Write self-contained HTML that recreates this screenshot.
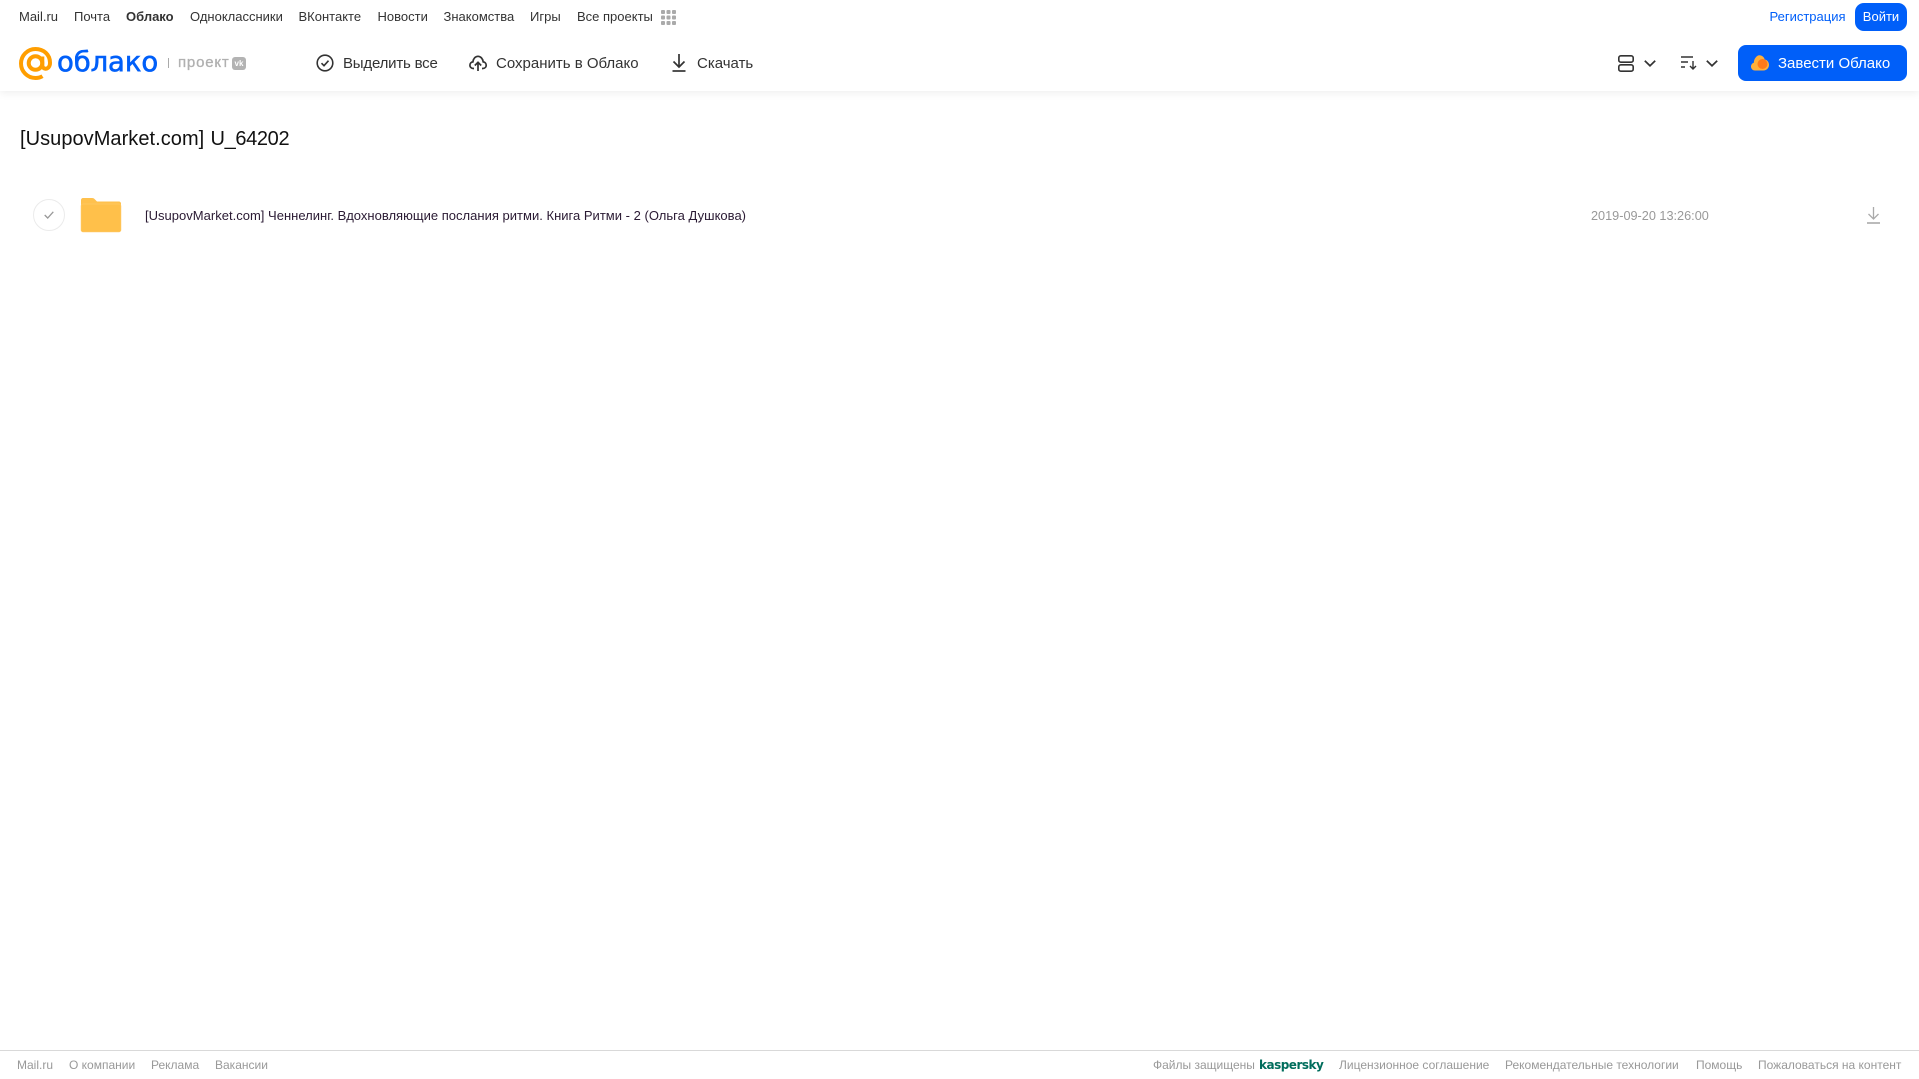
<!DOCTYPE html>
<html lang="ru"><head><meta charset="utf-8"><title>Облако</title>
<style>
html,body{margin:0;padding:0;background:#fff}
body{width:1919px;height:1079px;position:relative;overflow:hidden;font-family:"Liberation Sans",sans-serif}
.t{position:absolute;white-space:nowrap;line-height:20px;height:20px}
.n{font-size:13px;color:#333;top:7px}
.b{font-size:15px;color:#333;top:54px}
.f{font-size:12px;color:#999;top:1055px}
svg{position:absolute;overflow:visible}
#hdr{position:absolute;left:0;top:0;width:1919px;height:91px;background:#fff;box-shadow:0 2px 8px rgba(0,0,0,.07)}
</style></head><body>
<div id="hdr"></div>
<span class="t n" style="left:19px">Mail.ru</span>
<span class="t n" style="left:74px">Почта</span>
<span class="t n" style="left:126px;font-weight:bold">Облако</span>
<span class="t n" style="left:190px">Одноклассники</span>
<span class="t n" style="left:298.500px">ВКонтакте</span>
<span class="t n" style="left:377.500px">Новости</span>
<span class="t n" style="left:443.500px">Знакомства</span>
<span class="t n" style="left:530px">Игры</span>
<span class="t n" style="left:577px">Все проекты</span>
<svg style="left:661px;top:10px" width="15" height="15" fill="#aaa"><rect width="4" height="4" rx="1"/><rect x="5.500" width="4" height="4" rx="1"/><rect x="11" width="4" height="4" rx="1"/><rect y="5.500" width="4" height="4" rx="1"/><rect x="5.500" y="5.500" width="4" height="4" rx="1"/><rect x="11" y="5.500" width="4" height="4" rx="1"/><rect y="11" width="4" height="4" rx="1"/><rect x="5.500" y="11" width="4" height="4" rx="1"/><rect x="11" y="11" width="4" height="4" rx="1"/></svg>
<span class="t n" style="left:1769.500px;color:#005ff9">Регистрация</span>
<div style="position:absolute;left:1855px;top:3px;width:52px;height:28px;border-radius:9px;background:#005ff9;color:#fff;font-size:13px;line-height:28px;text-align:center">Войти</div>
<svg style="left:19px;top:47px" width="33" height="33" viewBox="0 0 33 33" fill="none" stroke="#ff9e00" stroke-width="4"><circle cx="16.500" cy="16" r="6.800"/><path d="M23.300 9.500v8.500c0 5.500 7.700 5 7.700-2.300C31 7.500 24.500 2 16.500 2 8.500 2 2 8.500 2 16.500S8.500 31 16.500 31c3 0 5-.6 7-1.800"/></svg>
<span class="t" style="left:57px;top:46px;height:32px;line-height:32px;font-family:'DejaVu Sans',sans-serif;font-size:27.500px;color:#005ff9;-webkit-text-stroke:.6px #005ff9;letter-spacing:-.1px">облако</span>
<div style="position:absolute;left:168px;top:58px;width:1px;height:10px;background:#aaa"></div>
<span class="t" style="left:178px;top:53px;font-size:15px;color:#b0b0b0;-webkit-text-stroke:.3px #b0b0b0;letter-spacing:.8px">проект</span>
<div style="position:absolute;left:232px;top:57px;width:14px;height:13px;border-radius:3px;background:#b3b3b3;color:#fff;font-size:8px;font-weight:bold;line-height:13px;text-align:center">vk</div>
<svg style="left:316px;top:54px" width="18" height="18" viewBox="0 0 18 18" fill="none" stroke="#333" stroke-width="1.600"><circle cx="9" cy="9" r="7.800"/><path d="M5.500 9.200l2.500 2.500 4.500-5"/></svg>
<span class="t b" style="left:343px;letter-spacing:-.2px">Выделить все</span>
<svg style="left:469px;top:54px" width="18" height="18" viewBox="0 0 18 18" fill="none" stroke="#333" stroke-width="1.700"><path d="M5 14.500H4.500C2 14.500 .9 12.800 .9 11.200c0-1.800 1.300-3.100 3-3.300C4.300 4.600 6.400 2.300 9 2.300s4.800 2.300 5.200 5.600c1.700.2 3 1.500 3 3.300 0 1.600-1.200 3.300-3.600 3.300H13"/><path d="M9 17V8.500M5.800 11.500 9 8.300l3.200 3.200"/></svg>
<span class="t b" style="left:496px">Сохранить в Облако</span>
<svg style="left:671px;top:54px" width="16" height="18" viewBox="0 0 16 18" fill="none" stroke="#333" stroke-width="1.700"><path d="M8 0v13M2.500 7.500 8 13l5.500-5.500"/><path d="M1.500 17h13"/></svg>
<span class="t b" style="left:697px">Скачать</span>
<svg style="left:1618px;top:55px" width="16" height="17" viewBox="0 0 16 17" fill="none" stroke="#333" stroke-width="1.600"><rect x=".8" y=".8" width="14.400" height="6.400" rx="2"/><rect x=".8" y="9.800" width="14.400" height="6.400" rx="2"/></svg>
<svg style="left:1644px;top:60px" width="12" height="7" viewBox="0 0 12 7" fill="none" stroke="#333" stroke-width="1.700"><path d="M.8.800 6 5.800 11.200.800"/></svg>
<svg style="left:1681px;top:56px" width="16" height="14" viewBox="0 0 16 14" fill="none" stroke="#333" stroke-width="1.400"><path d="M0 1h12M0 6h7M0 11h4"/><path d="M12 5v8M9 10l3 3 3-3"/></svg>
<svg style="left:1706px;top:60px" width="12" height="7" viewBox="0 0 12 7" fill="none" stroke="#333" stroke-width="1.700"><path d="M.8.800 6 5.800 11.200.800"/></svg>
<div style="position:absolute;left:1738px;top:45px;width:169px;height:36px;border-radius:8px;background:#005ff9"></div>
<svg style="left:1751px;top:55px" width="18" height="16" viewBox="0 0 18 16"><path d="M4 15.500C1.800 15.500 0 13.800 0 11.500c0-1.900 1.200-3.400 2.800-3.800C3 4 5.500 .3 8.500.3c2.500 0 4.600 1.800 5.200 4.200 2.400.3 4.300 2.500 4.300 5.400 0 3-2.300 5.600-5.500 5.600z" fill="#ffb03a"/><circle cx="11.500" cy="9" r="5" fill="#ff7a1a"/></svg>
<span class="t" style="left:1778px;top:54px;font-size:15px;color:#fff">Завести Облако</span>
<span class="t" style="left:20px;top:125px;height:28px;line-height:28px;font-size:20px;color:#111;letter-spacing:.05px">[UsupovMarket.com]</span>
<span class="t" style="left:210.500px;top:125px;height:28px;line-height:28px;font-size:20px;color:#111;letter-spacing:-.35px">U_64202</span>
<div style="position:absolute;left:33px;top:199px;width:30px;height:30px;border:1px solid #ebebeb;border-radius:50%"></div>
<svg style="left:44px;top:211px" width="10" height="8" viewBox="0 0 10 8" fill="none" stroke="#999" stroke-width="1.300"><path d="M.7 4l3 3L9.300.8"/></svg>
<svg style="left:81px;top:198px" width="40" height="34" viewBox="0 0 40 34"><path d="M2 0h9c1.500 0 2.200.6 3 1.500L16 3.500h22c1.100 0 2 .9 2 2V32c0 1.100-.9 2-2 2H2c-1.100 0-2-.9-2-2V2C0 .9.900 0 2 0z" fill="#ffc14d"/><path d="M0 8c0-1.100.9-2 2-2h36c1.100 0 2 .9 2 2v24c0 1.100-.9 2-2 2H2c-1.100 0-2-.9-2-2z" fill="#ffc04a" stroke="#ffcd70" stroke-width=".5"/></svg>
<span class="t" style="left:145px;top:206px;font-size:13px;color:#2a1a33;letter-spacing:.013px">[UsupovMarket.com] Ченнелинг. Вдохновляющие послания ритми. Книга Ритми - 2 (Ольга Душкова)</span>
<span class="t" style="left:1591px;top:206px;font-size:12.700px;color:#999">2019-09-20 13:26:00</span>
<svg style="left:1867px;top:207px" width="13" height="17" viewBox="0 0 13 17" fill="none" stroke="#aaa" stroke-width="1.300"><path d="M6.500 0v12M1.500 7l5 5 5-5"/><path d="M0 16h13" stroke-width="1.600"/></svg>
<div style="position:absolute;left:0;top:1050px;width:1919px;height:1px;background:#d9d9d9"></div>
<span class="t f" style="left:17px">Mail.ru</span>
<span class="t f" style="left:69px">О компании</span>
<span class="t f" style="left:151px">Реклама</span>
<span class="t f" style="left:215px">Вакансии</span>
<span class="t f" style="left:1153px">Файлы защищены</span>
<span class="t f" style="left:1259px;font-family:'DejaVu Sans',sans-serif;font-size:12px;font-weight:bold;letter-spacing:-.5px;color:#006d5c">kaspersky</span>
<span class="t f" style="left:1339px">Лицензионное соглашение</span>
<span class="t f" style="left:1505px">Рекомендательные технологии</span>
<span class="t f" style="left:1696px">Помощь</span>
<span class="t f" style="left:1758px">Пожаловаться на контент</span>
</body></html>
